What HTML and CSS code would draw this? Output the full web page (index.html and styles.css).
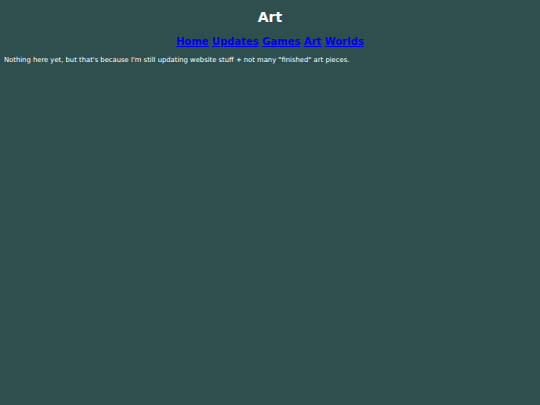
FILE: index.html
```html
<!DOCTYPE html>
<html>
<head>
<meta charset="utf-8">
<link rel="stylesheet" href="styles.css">
</head>
<body>
<h1 class="title">Art</h1>
<nav class="nav"><a href="#">Home</a> <a href="#">Updates</a> <a href="#">Games</a> <a href="#">Art</a> <a href="#">Worlds</a></nav>
<p class="text">Nothing here yet, but that's because I'm still updating website stuff + not many "finished" art pieces.</p>
</body>
</html>
```
FILE: styles.css
```css
html, body {
  background: #2f4f4f;
}
body {
  margin: 0;
  padding: 0 4px;
  color: #ffffff;
  font-family: "DejaVu Sans", Verdana, sans-serif;
}
.title {
  margin: 0;
  padding-top: 9px;
  text-align: center;
  font-size: 14px;
  line-height: 17px;
  font-weight: bold;
}
.nav {
  margin-top: 9px;
  text-align: center;
  font-size: 10px;
  line-height: 14px;
  font-weight: bold;
}
.nav a {
  color: #0000ee;
  text-decoration: underline;
}
.text {
  margin: 7px 0 0;
  font-size: 6.8px;
  line-height: 9px;
}
```
